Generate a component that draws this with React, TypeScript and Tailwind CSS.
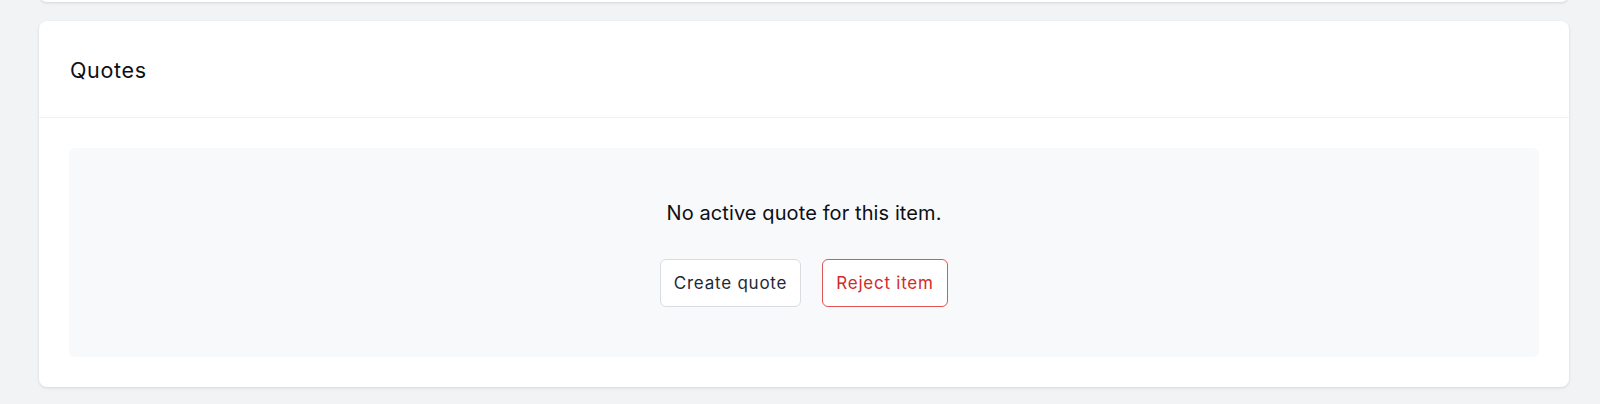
import React from "react";

export default function App() {
  return (
    <div
      className="flex min-h-[404px] w-[1600px] flex-col overflow-hidden bg-[#f2f3f5] pl-[39px] pr-[31px]"
      style={{ fontFamily: "Inter, 'Noto Sans', sans-serif" }}
    >
      <div className="-mt-[18px] h-[20px] shrink-0 rounded-b-lg bg-white shadow-[0_1px_3px_rgba(0,0,0,0.12)]" />
      <div className="mt-[19px] rounded-lg bg-white shadow-[0_1px_3px_rgba(0,0,0,0.12)]">
        <div className="flex h-[97px] items-center border-b border-[#f0f1f3] px-[31px] pt-[3px]">
          <h2 className="text-[21.5px] font-normal tracking-[0.03em] text-[#0d0f14]">Quotes</h2>
        </div>
        <div className="px-[30px] pt-[30px] pb-[30px]">
          <div className="flex h-[209px] flex-col items-center rounded-md bg-[#f8f9fb] pt-[51px]">
            <p className="text-[20px] leading-[28px] tracking-[0.005em] text-[#0d0f14]">
              No active quote for this item.
            </p>
            <div className="mt-[32px] flex gap-[21px]">
              <button className="h-[48px] w-[141px] rounded-md border border-[#d9dce1] bg-white pt-[2px] text-[17px] tracking-[0.045em] text-[#1f2937]">
                Create quote
              </button>
              <button className="h-[48px] w-[126px] rounded-md border border-[#e05555] bg-white pt-[2px] text-[17px] tracking-[0.045em] text-[#d42a2a]">
                Reject item
              </button>
            </div>
          </div>
        </div>
      </div>
    </div>
  );
}
